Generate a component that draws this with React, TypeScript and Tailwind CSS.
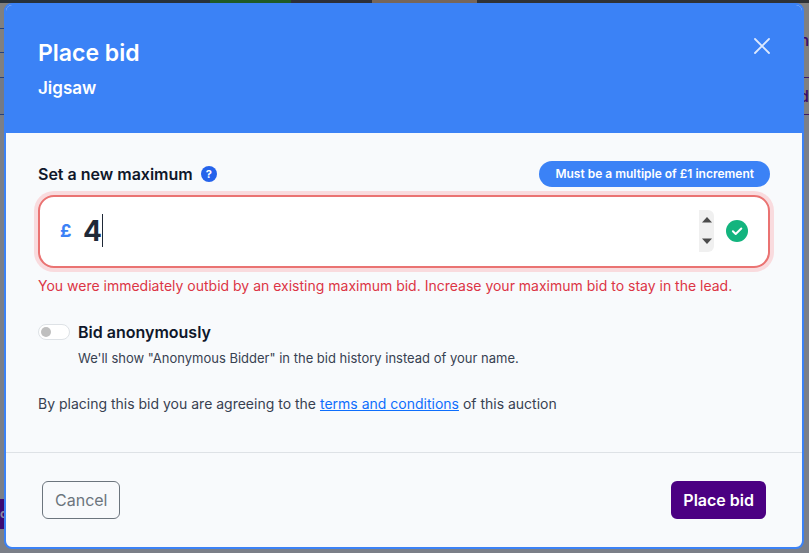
import { useState } from "react";

function Backdrop() {
  return (
    <div aria-hidden="true" className="flex min-h-screen flex-col bg-[#7b7f88]">
      <div className="flex h-[3px] bg-[#2f3235]">
        <div className="w-[26%] bg-[#27313a]" />
        <div className="w-[10%] bg-[#1f5a26]" />
        <div className="w-[10%] bg-[#2c2f38]" />
        <div className="w-[13%] bg-[#776659]" />
      </div>
      <div className="flex justify-between">
        <div className="w-3 bg-[#808080]">
          <div className="h-[26px] border-b border-[#27427c]" />
          <div className="h-6 border-b border-[#27427c]" />
          <div className="h-[25px] border-b border-[#27427c]" />
          <div className="h-[37px] border-b border-[#27427c] bg-[#747a86]" />
        </div>
        <div className="w-12 bg-[#808080] text-base font-medium text-[#3b0a68]">
          <div className="flex h-[75px] items-center justify-end border-b border-[#3b1a68]">n</div>
          <div className="flex h-[37px] items-center justify-end border-b border-[#3b1a68]">d</div>
        </div>
      </div>
      <div className="flex-1" />
      <div className="mb-6 flex h-[30px] w-5 items-center bg-[#3c0a72] text-xs font-bold text-[#8c86a0]">c</div>
    </div>
  );
}

function Caret({ down = false }: { down?: boolean }) {
  return (
    <svg viewBox="0 0 10 6" className="h-[6px] w-[10px]" fill="#4b4b4b" aria-hidden="true">
      <path d={down ? "M0 0.5H10L5 6Z" : "M0 5.5H10L5 0Z"} />
    </svg>
  );
}

export default function App() {
  const [bid, setBid] = useState("4");
  const [anonymous, setAnonymous] = useState(false);
  const step = (by: number) => setBid(String(Math.max(0, Number(bid) + by)));

  return (
    <div className="relative font-['Inter',sans-serif]">
      <Backdrop />
      <div className="absolute inset-0 flex pt-[3px] pr-[5px] pb-1 pl-1">
        <div
          role="dialog"
          aria-labelledby="dialog-title"
          className="flex flex-1 flex-col overflow-hidden rounded-lg border-2 border-[#3b82f6] bg-[#f8fafc]"
        >
          <header className="flex items-start justify-between bg-[#3b82f6] px-8 py-8 text-white">
            <div>
              <h1 id="dialog-title" className="text-[23px] leading-8 font-semibold">
                Place bid
              </h1>
              <p className="mt-1 pt-[2px] text-[17px] leading-[26px] font-semibold">Jigsaw</p>
            </div>
            <button type="button" aria-label="Close" className="mt-[1px] text-[#dde9fe]">
              <svg viewBox="0 0 16 16" className="size-4" fill="none" stroke="currentColor" strokeWidth="1.8" strokeLinecap="round" aria-hidden="true">
                <path d="M1 1 15 15M15 1 1 15" />
              </svg>
            </button>
          </header>

          <main className="flex-1 px-8 pt-7">
            <div className="flex h-[26px] items-center justify-between">
              <div className="flex items-center gap-2">
                <label htmlFor="bid" className="text-base font-semibold text-[#0f172a]">
                  Set a new maximum
                </label>
                <button
                  type="button"
                  aria-label="Help"
                  className="flex size-4 items-center justify-center rounded-full bg-[#2563eb] text-[11px] font-bold text-white"
                >
                  ?
                </button>
              </div>
              <span className="rounded-full bg-[#3b82f6] px-4 text-xs leading-[26px] font-semibold text-white">
                Must be a multiple of £1 increment
              </span>
            </div>

            <div className="mt-2 flex h-[73px] items-center rounded-2xl border-2 border-[#ea7372] bg-white px-5 pb-[2px] ring-4 ring-[#f9dbde]">
              <span className="w-[23px] text-lg font-bold text-[#3b82f6]">£</span>
              <input
                id="bid"
                type="text"
                inputMode="numeric"
                value={bid}
                onChange={(e) => setBid(e.target.value)}
                className="field-sizing-content text-[28px] leading-9 font-bold text-[#1f2937] outline-none"
              />
              <span aria-hidden="true" className="h-[33px] w-px bg-[#1f2937]" />
              <div className="ml-auto flex h-[42px] w-[15px] flex-col rounded-r-md bg-[#f0f0f0]">
                <button type="button" aria-label="Increase bid" onClick={() => step(1)} className="flex flex-1 items-center justify-center">
                  <Caret />
                </button>
                <button type="button" aria-label="Decrease bid" onClick={() => step(-1)} className="flex flex-1 items-center justify-center">
                  <Caret down />
                </button>
              </div>
              <svg viewBox="0 0 22 22" className="ml-3 size-[22px]" fill="none" role="img" aria-label="Valid amount">
                <circle cx="11" cy="11" r="11" fill="#13b47e" />
                <path d="M6.9 11.3 9.7 14 15.3 8.5" stroke="#fff" strokeWidth="2" strokeLinecap="round" strokeLinejoin="round" />
              </svg>
            </div>
            <p className="mt-[6px] text-sm leading-6 text-[#dc3545]">
              You were immediately outbid by an existing maximum bid. Increase your maximum bid to stay in the lead.
            </p>

            <div className="mt-[22px] flex items-start gap-2">
              <span className="relative mt-1 flex h-4 w-8">
                <input
                  id="anonymous"
                  type="checkbox"
                  role="switch"
                  checked={anonymous}
                  onChange={(e) => setAnonymous(e.target.checked)}
                  aria-describedby="anonymous-hint"
                  className="peer h-4 w-8 appearance-none rounded-full border border-[#dee2e6] bg-white checked:bg-[#3b82f6]"
                />
                <span className="pointer-events-none absolute top-[3px] left-[3px] size-[10px] rounded-full bg-[#bfbfbf] peer-checked:left-[19px] peer-checked:bg-white" />
              </span>
              <div>
                <label htmlFor="anonymous" className="block text-base leading-6 font-semibold text-[#0f172a]">
                  Bid anonymously
                </label>
                <p id="anonymous-hint" className="mt-[2px] text-[13px] leading-6 text-[#374151]">
                  We'll show "Anonymous Bidder" in the bid history instead of your name.
                </p>
              </div>
            </div>

            <p className="mt-[22px] text-sm leading-6 text-[#374151]">
              By placing this bid you are agreeing to the{" "}
              <a href="#terms" className="text-[#0d6efd] underline">
                terms and conditions
              </a>{" "}
              of this auction
            </p>
          </main>

          <footer className="flex items-center justify-between border-t border-[#dee2e6] px-9 py-7">
            <button type="button" className="h-[38px] rounded-md border border-[#6c757d] px-3 text-base text-[#6c757d]">
              Cancel
            </button>
            <button type="button" className="h-[38px] rounded-md bg-[#4b0082] px-3 text-base font-semibold text-white">
              Place bid
            </button>
          </footer>
        </div>
      </div>
    </div>
  );
}
